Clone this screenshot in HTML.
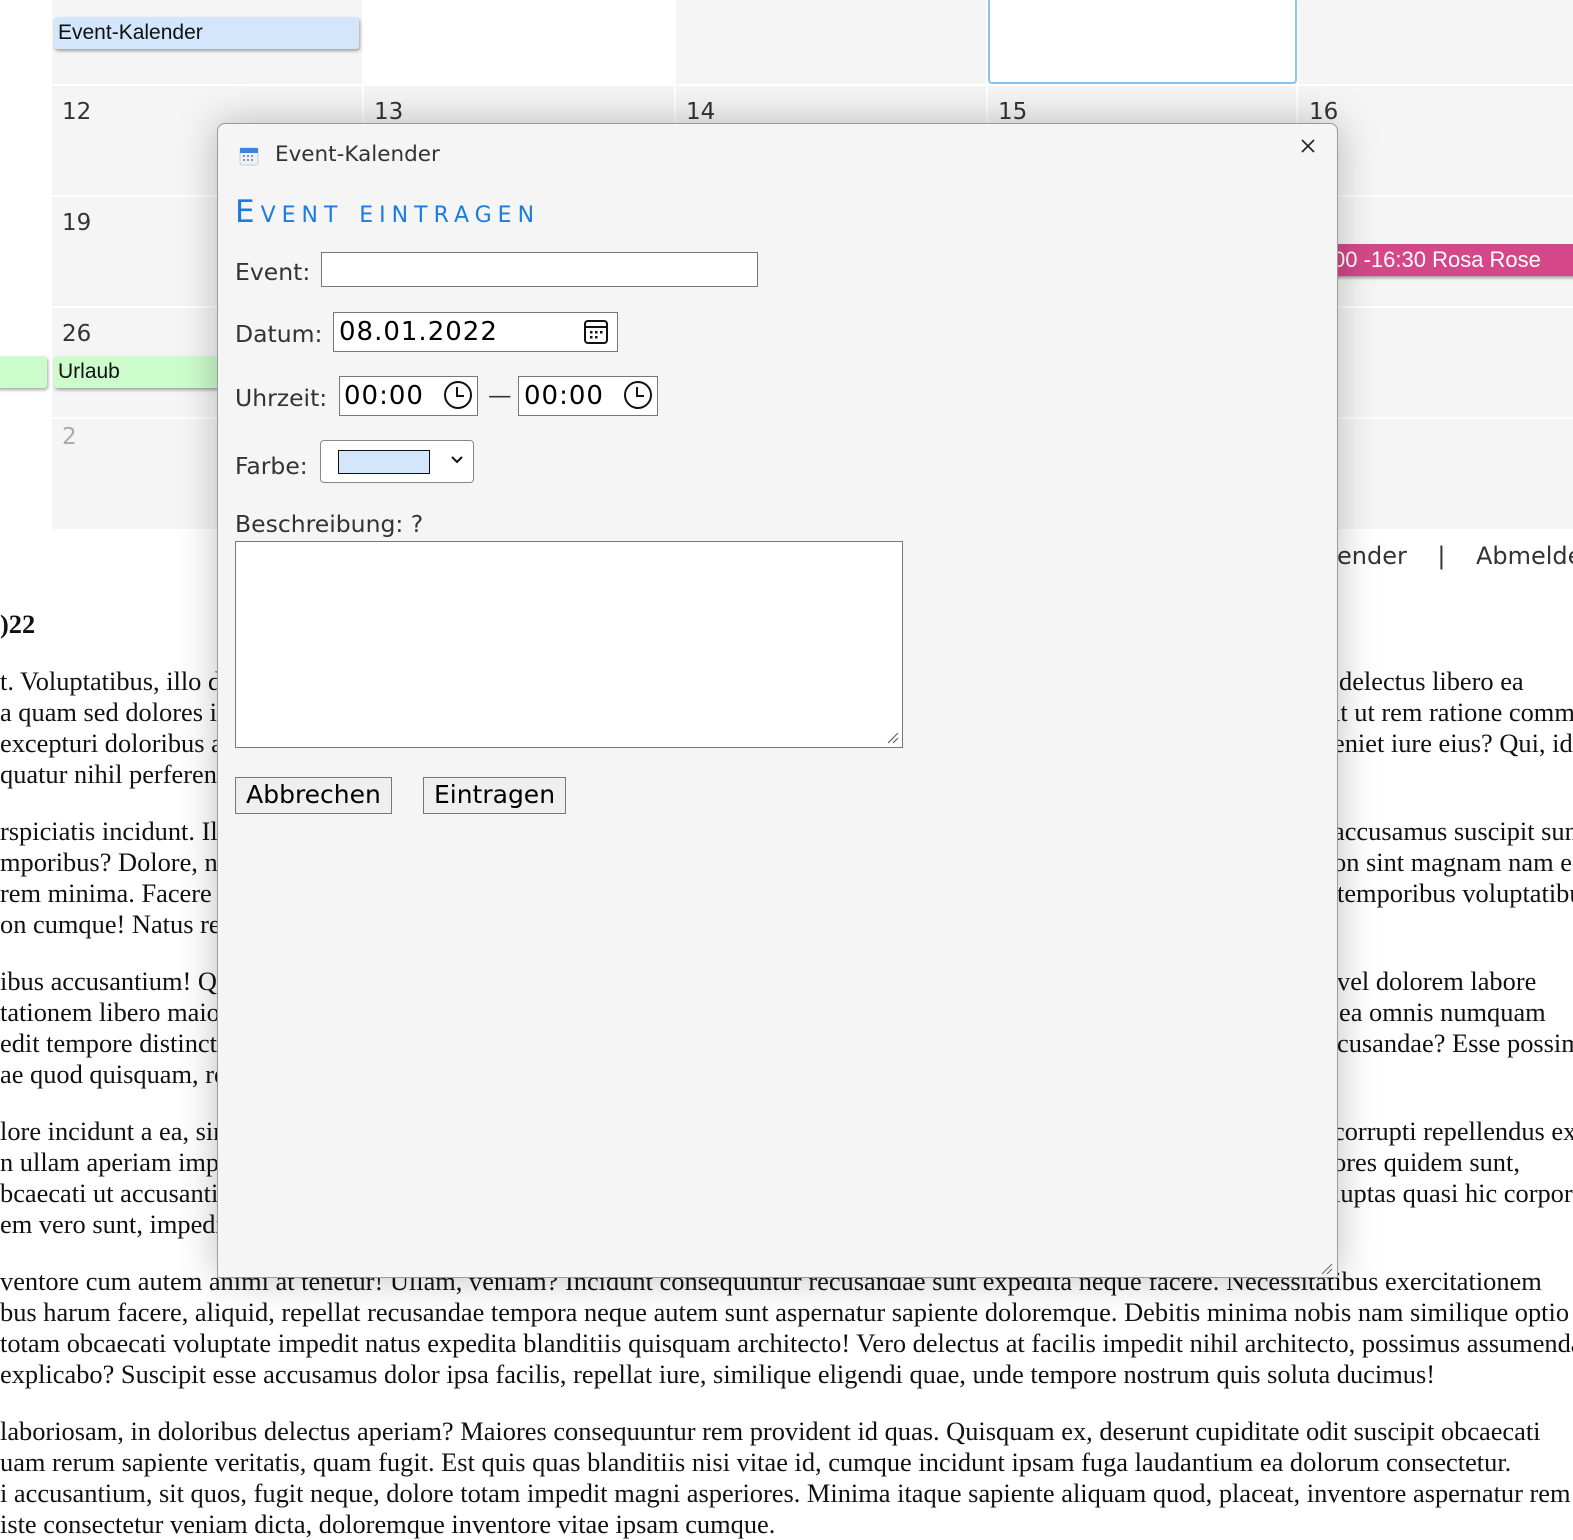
<!DOCTYPE html>
<html><head><meta charset="utf-8">
<style>
*{margin:0;padding:0;box-sizing:border-box}
body{width:1573px;height:1524px;overflow:hidden;background:#fff;position:relative;font-family:"Liberation Sans",sans-serif}
.cell{position:absolute;background:#f5f5f5}
.num{position:absolute;font-family:"DejaVu Sans","Liberation Sans",sans-serif;font-size:23px;color:#333}
.t{position:absolute;font-family:"Liberation Serif",serif;font-size:26.4px;color:#111;white-space:nowrap;line-height:31px}
.ev{position:absolute;height:32px;font-size:21px;line-height:32px;padding-left:4px;border-radius:3px;box-shadow:1px 2px 3px rgba(0,0,0,.35);color:#111}
#dlg{position:absolute;left:217px;top:123px;width:1121px;height:1155px;background:#f5f5f5;border:1px solid #9a9a9a;border-radius:8px 8px 0 0;box-shadow:0 0 40px rgba(0,0,0,.25);z-index:5;font-family:"DejaVu Sans","Liberation Sans",sans-serif;color:#333}
.lab{position:absolute;font-size:23.5px;color:#333}
.box{position:absolute;background:#fff;border:1px solid #777}
.inp{position:absolute;font-size:26px;color:#000;letter-spacing:1px}
.btn{position:absolute;background:#efefef;border:1px solid #777;font-size:25px;color:#000;text-align:center;line-height:34px}
</style></head><body>

<div class="cell" style="left:52px;top:0;width:310px;height:84px"></div>
<div class="cell" style="left:676px;top:0;width:310px;height:84px"></div>
<div class="cell" style="left:1298px;top:0;width:275px;height:84px"></div>
<div style="position:absolute;left:988px;top:-3px;width:309px;height:87px;border:2px solid #8cc4f0;border-radius:4px;background:#fff"></div>
<div class="cell" style="left:52px;top:86px;width:310px;height:109px"></div>
<div class="cell" style="left:364px;top:86px;width:310px;height:109px"></div>
<div class="cell" style="left:676px;top:86px;width:310px;height:109px"></div>
<div class="cell" style="left:988px;top:86px;width:308px;height:109px"></div>
<div class="cell" style="left:1298px;top:86px;width:275px;height:109px"></div>
<div class="cell" style="left:52px;top:197px;width:310px;height:109px"></div>
<div class="cell" style="left:1298px;top:197px;width:275px;height:109px"></div>
<div class="cell" style="left:52px;top:308px;width:310px;height:109px"></div>
<div class="cell" style="left:1298px;top:308px;width:275px;height:109px"></div>
<div class="cell" style="left:52px;top:419px;width:310px;height:110px"></div>
<div class="cell" style="left:1298px;top:419px;width:275px;height:110px"></div>
<div class="num" style="left:62px;top:99px">12</div>
<div class="num" style="left:374px;top:99px">13</div>
<div class="num" style="left:686px;top:99px">14</div>
<div class="num" style="left:998px;top:99px">15</div>
<div class="num" style="left:1309px;top:99px">16</div>
<div class="num" style="left:62px;top:210px">19</div>
<div class="num" style="left:62px;top:321px">26</div>
<div class="num" style="left:62px;top:424px;color:#aaa">2</div>
<div class="ev" style="left:54px;top:17px;width:305px;background:#d3e6fb">Event-Kalender</div>
<div class="ev" style="left:-5px;top:356px;width:52px;background:#ccfccc"></div>
<div class="ev" style="left:54px;top:356px;width:170px;background:#ccfccc">Urlaub</div>
<div class="ev" style="left:1300px;top:244px;width:280px;background:#d4488a;color:#fff;padding-left:33px;font-size:22px">00 -16:30 Rosa Rose</div>

<div class="t" style="left:1337px;top:541px;font-family:'DejaVu Sans',sans-serif;font-size:24px;color:#333">ender &nbsp;&nbsp;&nbsp;| &nbsp;&nbsp;&nbsp;Abmelden</div>
<div class="t" style="left:0;top:609px;font-weight:bold">)22</div>

<div class="t" style="left:0;top:666px">t. Voluptatibus, illo dolor</div>
<div class="t" style="left:0;top:697px">a quam sed dolores illum</div>
<div class="t" style="left:0;top:728px">excepturi doloribus autem</div>
<div class="t" style="left:0;top:759px">quatur nihil perferendis</div>
<div class="t" style="left:0;top:816px">rspiciatis incidunt. Illum</div>
<div class="t" style="left:0;top:847px">mporibus? Dolore, nihil</div>
<div class="t" style="left:0;top:878px">rem minima. Facere aut</div>
<div class="t" style="left:0;top:909px">on cumque! Natus rerum</div>
<div class="t" style="left:0;top:966px">ibus accusantium! Quis</div>
<div class="t" style="left:0;top:997px">tationem libero maiores</div>
<div class="t" style="left:0;top:1028px">edit tempore distinctio</div>
<div class="t" style="left:0;top:1059px">ae quod quisquam, rem</div>
<div class="t" style="left:0;top:1116px">lore incidunt a ea, sint</div>
<div class="t" style="left:0;top:1147px">n ullam aperiam impedit</div>
<div class="t" style="left:0;top:1178px">bcaecati ut accusantium</div>
<div class="t" style="left:0;top:1209px">em vero sunt, impedit</div>

<div class="t" style="left:1339px;top:666px">delectus libero ea</div>
<div class="t" style="left:1333px;top:697px">it ut rem ratione commodi</div>
<div class="t" style="left:1333px;top:728px">eniet iure eius? Qui, id</div>
<div class="t" style="left:1333px;top:816px">accusamus suscipit sunt</div>
<div class="t" style="left:1333px;top:847px">on sint magnam nam eos</div>
<div class="t" style="left:1337px;top:878px">temporibus voluptatibus</div>
<div class="t" style="left:1337px;top:966px">vel dolorem labore</div>
<div class="t" style="left:1339px;top:997px">ea omnis numquam</div>
<div class="t" style="left:1337px;top:1028px">cusandae? Esse possimus</div>
<div class="t" style="left:1333px;top:1116px">corrupti repellendus ex</div>
<div class="t" style="left:1333px;top:1147px">ores quidem sunt,</div>
<div class="t" style="left:1333px;top:1178px">luptas quasi hic corporis</div>

<div class="t" style="left:0;top:1266px">ventore cum autem animi at tenetur! Ullam, veniam? Incidunt consequuntur recusandae sunt expedita neque facere. Necessitatibus exercitationem</div>
<div class="t" style="left:0;top:1297px">bus harum facere, aliquid, repellat recusandae tempora neque autem sunt aspernatur sapiente doloremque. Debitis minima nobis nam similique optio</div>
<div class="t" style="left:0;top:1328px">totam obcaecati voluptate impedit natus expedita blanditiis quisquam architecto! Vero delectus at facilis impedit nihil architecto, possimus assumenda</div>
<div class="t" style="left:0;top:1359px">explicabo? Suscipit esse accusamus dolor ipsa facilis, repellat iure, similique eligendi quae, unde tempore nostrum quis soluta ducimus!</div>
<div class="t" style="left:0;top:1416px">laboriosam, in doloribus delectus aperiam? Maiores consequuntur rem provident id quas. Quisquam ex, deserunt cupiditate odit suscipit obcaecati</div>
<div class="t" style="left:0;top:1447px">uam rerum sapiente veritatis, quam fugit. Est quis quas blanditiis nisi vitae id, cumque incidunt ipsam fuga laudantium ea dolorum consectetur.</div>
<div class="t" style="left:0;top:1478px">i accusantium, sit quos, fugit neque, dolore totam impedit magni asperiores. Minima itaque sapiente aliquam quod, placeat, inventore aspernatur rem</div>
<div class="t" style="left:0;top:1509px">iste consectetur veniam dicta, doloremque inventore vitae ipsam cumque.</div>

<div id="dlg">
  <svg style="position:absolute;left:20px;top:21px" width="22" height="22" viewBox="0 0 22 22"><rect x="2" y="3" width="18" height="17" rx="2" fill="#eef0f8" stroke="#c8cde0"/><rect x="2" y="3" width="18" height="5" fill="#3a86d8"/><g fill="#8a90c0"><rect x="5" y="10" width="2" height="2"/><rect x="9" y="10" width="2" height="2"/><rect x="13" y="10" width="2" height="2"/><rect x="5" y="14" width="2" height="2"/><rect x="9" y="14" width="2" height="2"/><rect x="13" y="14" width="2" height="2"/></g></svg>
  <div class="lab" style="left:57px;top:18px;font-size:21.5px">Event-Kalender</div>
  <svg style="position:absolute;left:1083px;top:15px" width="14" height="14" viewBox="0 0 14 14"><path d="M1 1L13 13M13 1L1 13" stroke="#222" stroke-width="1.6"/></svg>
  <div style="position:absolute;left:17px;top:70px;font-size:31px;color:#1a7be0;letter-spacing:6px;font-variant:small-caps">Event eintragen</div>

  <div class="lab" style="left:17px;top:134px">Event:</div>
  <div class="box" style="left:103px;top:128px;width:437px;height:35px"></div>

  <div class="lab" style="left:17px;top:196px">Datum:</div>
  <div class="box" style="left:115px;top:188px;width:285px;height:40px"></div>
  <div class="inp" style="left:121px;top:193px">08.01.2022</div>
  <svg style="position:absolute;left:365px;top:194px" width="26" height="28" viewBox="0 0 26 28"><rect x="2" y="3" width="22" height="22" rx="3" fill="none" stroke="#111" stroke-width="2"/><line x1="2" y1="9" x2="24" y2="9" stroke="#111" stroke-width="2"/><g fill="#111"><rect x="7" y="13" width="2.5" height="2.5"/><rect x="12" y="13" width="2.5" height="2.5"/><rect x="17" y="13" width="2.5" height="2.5"/><rect x="7" y="18" width="2.5" height="2.5"/><rect x="12" y="18" width="2.5" height="2.5"/></g></svg>

  <div class="lab" style="left:17px;top:260px">Uhrzeit:</div>
  <div class="box" style="left:121px;top:252px;width:139px;height:40px"></div>
  <div class="inp" style="left:126px;top:257px">00:00</div>
  <svg style="position:absolute;left:225px;top:256px" width="30" height="30" viewBox="0 0 30 30"><circle cx="15" cy="15" r="13" fill="none" stroke="#111" stroke-width="2"/><path d="M14 7V16H21" fill="none" stroke="#111" stroke-width="2"/></svg>
  <div class="lab" style="left:270px;top:257px">—</div>
  <div class="box" style="left:300px;top:252px;width:140px;height:40px"></div>
  <div class="inp" style="left:306px;top:257px">00:00</div>
  <svg style="position:absolute;left:405px;top:256px" width="30" height="30" viewBox="0 0 30 30"><circle cx="15" cy="15" r="13" fill="none" stroke="#111" stroke-width="2"/><path d="M14 7V16H21" fill="none" stroke="#111" stroke-width="2"/></svg>

  <div class="lab" style="left:17px;top:328px">Farbe:</div>
  <div class="box" style="left:102px;top:316px;width:154px;height:43px;border-radius:4px;border-color:#888"></div>
  <div style="position:absolute;left:120px;top:326px;width:92px;height:24px;background:#d3e6fb;border:1px solid #111"></div>
  <svg style="position:absolute;left:232px;top:331px" width="14" height="10" viewBox="0 0 14 10"><path d="M2 2L7 7L12 2" fill="none" stroke="#111" stroke-width="2"/></svg>

  <div class="lab" style="left:17px;top:386px">Beschreibung: ?</div>
  <div class="box" style="left:17px;top:417px;width:668px;height:207px"></div>
  <svg style="position:absolute;left:668px;top:607px" width="14" height="14" viewBox="0 0 14 14"><path d="M2 12L12 2M7 12L12 7" stroke="#555" stroke-width="1"/></svg>

  <div class="btn" style="left:17px;top:653px;width:157px;height:37px">Abbrechen</div>
  <div class="btn" style="left:205px;top:653px;width:143px;height:37px">Eintragen</div>
  <svg style="position:absolute;left:1102px;top:1138px" width="14" height="14" viewBox="0 0 14 14"><path d="M2 12L12 2M7 12L12 7" stroke="#666" stroke-width="1"/></svg>
</div>
</body></html>
